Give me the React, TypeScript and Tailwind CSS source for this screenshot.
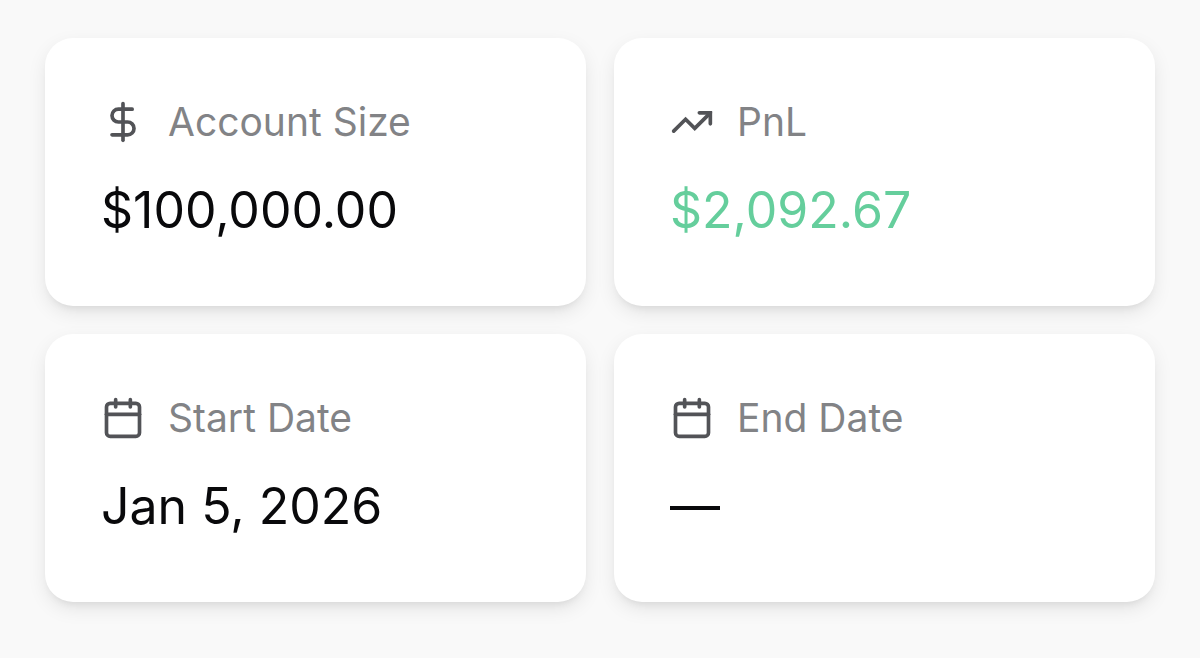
import { FC } from "react";
import { Calendar, DollarSign, LucideIcon, TrendingUp } from "lucide-react";

type Stat = {
  label: string;
  value: string;
  icon: LucideIcon;
  iconClass?: string;
  valueClass?: string;
};

const stats: Stat[] = [
  { label: "Account Size", value: "$100,000.00", icon: DollarSign },
  {
    label: "PnL",
    value: "$2,092.67",
    icon: TrendingUp,
    iconClass: "[stroke-linejoin:miter]",
    valueClass: "text-[#65ce9c]"
  },
  { label: "Start Date", value: "Jan 5, 2026", icon: Calendar },
  { label: "End Date", value: "—", icon: Calendar }
];

const StatCard: FC<{ stat: Stat }> = ({ stat }) => {
  const Icon = stat.icon;

  return (
    <div className="rounded-[28px] bg-white px-14 pt-14 pb-15 shadow-[0_7px_20px_-2px_rgba(0,0,0,0.1),0_6px_10px_-6px_rgba(0,0,0,0.1)]">
      <dt className="flex items-center gap-[23px] text-[39px] leading-14 text-[#828386]">
        <Icon
          className={`size-11 text-[#525357] ${stat.iconClass ?? ""}`}
          aria-hidden="true"
        />
        {stat.label}
      </dt>

      <dd
        className={`mt-6 text-[50px] leading-18 ${stat.valueClass ?? "text-[#09090b]"}`}
      >
        {stat.value}
      </dd>
    </div>
  );
};

export default function App() {
  return (
    <main className="min-h-screen bg-[#f9f9f9] px-[45px] py-[38px] font-['Inter',sans-serif]">
      <dl className="grid grid-cols-2 gap-7">
        {stats.map((stat) => (
          <StatCard key={stat.label} stat={stat} />
        ))}
      </dl>
    </main>
  );
}
